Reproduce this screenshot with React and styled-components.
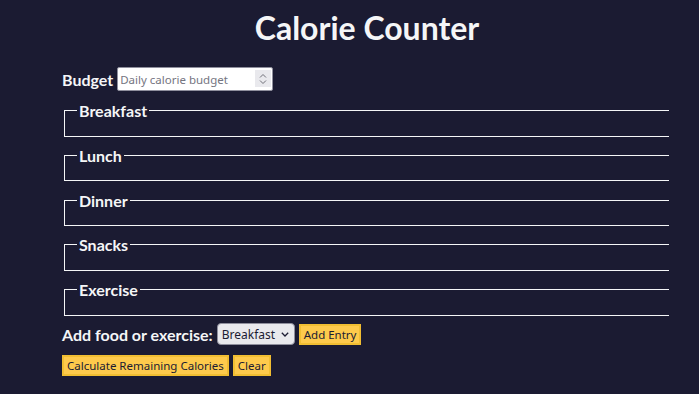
import React, { useState } from "react"
import styled, { createGlobalStyle } from "styled-components"

const GlobalStyle = createGlobalStyle`
  body {
    margin: 0;
    padding: 0;
    background-color: #1b1b32;
    color: #f5f6f7;
    font-family: Lato, "Liberation Sans", sans-serif;
  }
`

const sections = ["Breakfast", "Lunch", "Dinner", "Snacks", "Exercise"]

export default function App() {
  const [category, setCategory] = useState("breakfast")

  return (
    <>
      <GlobalStyle />
      <Main>
        <Title>Calorie Counter</Title>
        <Container>
          <Form>
            <BudgetRow>
              <Label htmlFor="budget">Budget</Label>
              <InputWrap>
                <NumberInput
                  id="budget"
                  type="number"
                  min="0"
                  placeholder="Daily calorie budget"
                />
                <Spinner aria-hidden="true">
                  <svg width="8" height="12" viewBox="0 0 8 12">
                    <path
                      d="M1 4.5 L4 1.5 L7 4.5 M1 7.5 L4 10.5 L7 7.5"
                      fill="none"
                      stroke="#6f6f78"
                      strokeWidth="1"
                    />
                  </svg>
                </Spinner>
              </InputWrap>
            </BudgetRow>
            {sections.map(name => (
              <Section key={name}>
                <Legend>{name}</Legend>
                <InputList />
              </Section>
            ))}
          </Form>
          <Controls>
            <Label htmlFor="entry-dropdown">Add food or exercise:</Label>
            <SelectWrap>
              <Select
                id="entry-dropdown"
                value={category}
                onChange={e => setCategory(e.target.value)}
              >
                <option value="breakfast">Breakfast</option>
                <option value="lunch">Lunch</option>
                <option value="dinner">Dinner</option>
                <option value="snacks">Snacks</option>
                <option value="exercise">Exercise</option>
              </Select>
              <Chevron width="8" height="5" viewBox="0 0 8 5" aria-hidden="true">
                <path d="M0.8 0.8 L4 4 L7.2 0.8" fill="none" stroke="#1b1b32" strokeWidth="1.3" />
              </Chevron>
            </SelectWrap>
            <Button type="button">Add Entry</Button>
          </Controls>
          <Controls>
            <Button type="submit">Calculate Remaining Calories</Button>
            <Button type="button">Clear</Button>
          </Controls>
        </Container>
      </Main>
    </>
  )
}

const Main = styled.main`
  padding: 0 27px 0 62px;
`

const Title = styled.h1`
  margin: 0;
  padding: 9px 0 20px;
  text-align: center;
  font-size: 32px;
  line-height: 38px;
  font-weight: 700;
`

const Container = styled.div`
  width: 610px;
`

const Form = styled.form`
  display: flex;
  flex-direction: column;
`

const BudgetRow = styled.div`
  display: flex;
  align-items: center;
  gap: 4px;
  height: 24px;
  margin-bottom: 10px;
`

const Label = styled.label`
  font-weight: 700;
  font-size: 16px;
  line-height: 19px;
`

const InputWrap = styled.div`
  position: relative;
  display: flex;
`

const NumberInput = styled.input`
  box-sizing: border-box;
  width: 156px;
  height: 24px;
  padding: 1px 22px 1px 2px;
  font-family: "Noto Sans", "Open Sans", sans-serif;
  font-size: 11.5px;
  color: #1b1b32;
  background: #ffffff;
  border: 1px solid #8f8f9d;
  border-radius: 2px;
  -moz-appearance: textfield;

  &::placeholder {
    color: #75757f;
  }

  &::-webkit-inner-spin-button,
  &::-webkit-outer-spin-button {
    -webkit-appearance: none;
    margin: 0;
  }
`

const Spinner = styled.span`
  position: absolute;
  top: 3px;
  right: 2px;
  width: 16px;
  height: 17px;
  display: flex;
  align-items: center;
  justify-content: center;
  background: #e9e9ed;
  pointer-events: none;
`

const Section = styled.fieldset`
  margin: 0 0 9.2px 2px;
  width: 605px;
  box-sizing: border-box;
  padding: 5.6px 12px 10px;
  border: 1px solid #f5f6f7;
  border-right: none;
  min-inline-size: min-content;

  &:last-of-type {
    margin-bottom: 7.5px;
  }
`

const Legend = styled.legend`
  padding: 0 2px;
  font-weight: 700;
  font-size: 16px;
  line-height: 19px;
`

const InputList = styled.div``

const Controls = styled.div`
  display: flex;
  align-items: center;
  gap: 4px;
  margin-bottom: 10px;
`

const SelectWrap = styled.div`
  position: relative;
  display: flex;
`

const Select = styled.select`
  box-sizing: border-box;
  width: 78px;
  height: 22px;
  padding: 0 16px 0 4px;
  font-family: "Noto Sans", "Open Sans", sans-serif;
  font-size: 12px;
  color: #1b1b32;
  background: #e9e9ed;
  border: 1px solid #8f8f9d;
  border-radius: 4px;
  appearance: none;
  -webkit-appearance: none;
`

const Chevron = styled.svg`
  position: absolute;
  right: 6px;
  top: 9px;
  pointer-events: none;
`

const Button = styled.button`
  box-sizing: border-box;
  height: 21px;
  padding: 0 3px;
  font-family: "Noto Sans", "Open Sans", sans-serif;
  font-size: 11.5px;
  color: #1b1b32;
  background-color: #feca4c;
  border: 2px solid #f1be32;
  border-radius: 0;
  cursor: pointer;
`
